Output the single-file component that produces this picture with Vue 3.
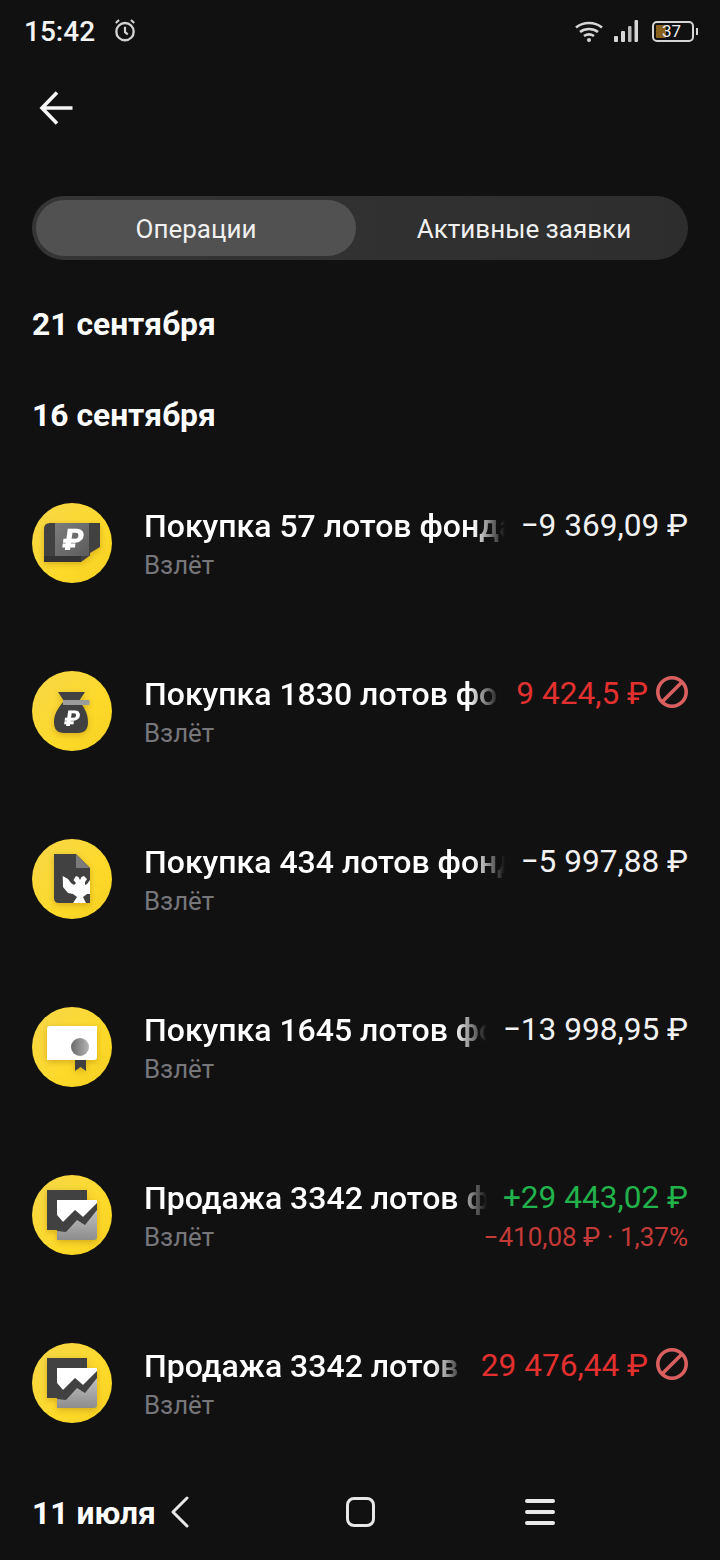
<template>
  <div class="screen">
    <div class="status-bar">
      <span class="time">15:42</span>
      <svg class="alarm" width="26" height="26" viewBox="0 0 24 24" fill="none" stroke="#d2d2d2">
        <circle cx="12" cy="13.500" r="8" stroke-width="2.200" />
        <path d="M12 9v5l2.600 2M3.500 5.500 6.500 2.800M20.500 5.500 17.500 2.800" stroke-width="2" />
      </svg>
      <div class="status-right">
        <svg width="32" height="24" viewBox="0 0 32 24" fill="none" stroke="#d6d6d6" stroke-width="2.600">
          <path d="M3 8.500c7.500-6 18.500-6 26 0M7 13c5.200-4 12.800-4 18 0M11 17c3-2 7-2 10 0" />
          <circle cx="16" cy="21" r="2" fill="#d6d6d6" stroke="none" />
        </svg>
        <svg class="signal" width="26" height="24" viewBox="0 0 26 24" fill="#d6d6d6">
          <rect x="1" y="17" width="4" height="6" rx="1" />
          <rect x="8" y="12" width="4" height="11" rx="1" />
          <rect x="15" y="7" width="3.500" height="16" rx="1" opacity="0.85" />
          <rect x="21.500" y="1" width="3.500" height="22" rx="1" />
        </svg>
        <div class="battery">
          <span class="battery-fill"></span>
          <span class="battery-text">37</span>
          <span class="battery-tip"></span>
        </div>
      </div>
    </div>

    <div class="topbar">
      <svg width="36" height="36" viewBox="0 0 36 36" fill="none" stroke="#f5f5f5" stroke-width="3.600">
        <path d="M33.500 18H3M18 2.500 3 18l15 15.500" />
      </svg>
    </div>

    <div class="tabs">
      <div class="tab active">Операции</div>
      <div class="tab second-tab">Активные заявки</div>
    </div>

    <h2 class="date first">21 сентября</h2>
    <h2 class="date second">16 сентября</h2>

    <ul class="list">
      <li v-for="op in operations" :key="op.id" class="row">
        <svg class="icon" width="80" height="80" viewBox="0 0 80 80">
          <defs>
            <linearGradient :id="'bg' + op.id" x1="0" y1="0" x2="1" y2="1">
              <stop offset="0" stop-color="#f6d64a" />
              <stop offset="0.6" stop-color="#fdda2a" />
              <stop offset="1" stop-color="#f6cf22" />
            </linearGradient>
            <linearGradient :id="'gray' + op.id" x1="0" y1="0" x2="1" y2="1">
              <stop offset="0" stop-color="#7c7c7c" />
              <stop offset="1" stop-color="#5c5c5c" />
            </linearGradient>
            <linearGradient :id="'chart' + op.id" x1="0" y1="0" x2="0" y2="1">
              <stop offset="0" stop-color="#d0d0d0" />
              <stop offset="1" stop-color="#8d8d8d" />
            </linearGradient>
            <linearGradient :id="'seal' + op.id" x1="0" y1="0" x2="1" y2="0">
              <stop offset="0" stop-color="#6a6a6a" />
              <stop offset="1" stop-color="#b4b4b4" />
            </linearGradient>
          </defs>
          <circle cx="40" cy="40" r="40" :fill="'url(#bg' + op.id + ')'" />

          <g v-if="op.icon === 'cash'" class="art">
            <path d="M18 20H68V44L58 50V52.500L49 59H12V26Q12 20 18 20Z" fill="#414141" />
            <path d="M23 20H57V53H23Z" :fill="'url(#gray' + op.id + ')'" />
            <path d="M12 53H49V59H12Z" fill="#333" />
            <text x="40" y="47" class="rub rub-big" transform="skewX(-8) translate(6.500 0)">₽</text>
          </g>

          <g v-else-if="op.icon === 'bag'" class="art">
            <path d="M26 21H53L47 30C52 36 56 42 56 51Q56 62 46 62H32Q22 62 22 51C22 42 27 36 32 30Z" fill="#414141" />
            <path d="M31 29H57Q58.500 31.500 57 34H31Z" fill="#9c9c9c" />
            <text x="40" y="55" class="rub rub-small" transform="skewX(-8) translate(7 0)">₽</text>
          </g>

          <g v-else-if="op.icon === 'doc'" class="art">
            <path d="M22 15H44L58 29V64H27Q22 64 22 59Z" fill="#414141" />
            <path d="M44 15 58 29H44Z" fill="#7a7a7a" />
            <path d="M30.700 37 36 40 39 44 42 46 44 44 41.500 41 44 37 46.500 38 48 41 49.500 38 52 37 55 40 53 43 53 46 55 45 58 41V55L55 55 51 58 54 64H41L45 58 41 55 36 54 31 48Z" fill="#fff" />
          </g>

          <g v-else-if="op.icon === 'cert'" class="art">
            <path d="M43 50H54V64L48.500 60 43 64Z" fill="#414141" />
            <path d="M18 19H65V50Q65 53 62 53H15V22Q15 19 18 19Z" fill="#fff" />
            <circle cx="48" cy="40" r="9" :fill="'url(#seal' + op.id + ')'" />
          </g>

          <g v-else class="art">
            <rect x="15" y="15" width="40" height="40" fill="#414141" />
            <path d="M25 25H65V62Q65 65 62 65H25Z" :fill="'url(#chart' + op.id + ')'" />
            <path d="M25 25H65V28L51 42 43 35 31 47 25 40Z" fill="#fff" />
            <path d="M25 40 31 47 43 35 51 42 65 28V35L53 50 45 45 34 57 25 56Z" fill="#414141" />
          </g>
        </svg>

        <div class="info">
          <div class="title">{{ op.title }}</div>
          <div class="sub">Взлёт</div>
        </div>

        <div class="right">
          <div class="amount-line">
            <span class="amount" :class="op.kind">{{ op.amount }}</span>
            <svg v-if="op.kind === 'failed'" class="ban" width="32" height="32" viewBox="0 0 32 32" fill="none" stroke="#d9605f" stroke-width="3.600">
              <circle cx="16" cy="16" r="14.200" />
              <path d="M6 26 26 6" />
            </svg>
          </div>
          <div v-if="op.extra" class="extra">{{ op.extra }}</div>
        </div>
      </li>
    </ul>

    <div class="navbar">
      <span class="sticky-date">11 июля</span>
      <div class="nav-cell">
        <svg width="20" height="32" viewBox="0 0 20 32" fill="none" stroke="#e8e8e8" stroke-width="3" stroke-linecap="round" stroke-linejoin="round">
          <path d="M17 2 3 16l14 14" />
        </svg>
      </div>
      <div class="nav-cell"><span class="nav-home"></span></div>
      <div class="nav-cell">
        <svg width="30" height="28" viewBox="0 0 30 28" fill="#e8e8e8">
          <rect x="0" y="1" width="30" height="4" rx="2" />
          <rect x="0" y="12" width="30" height="4" rx="2" />
          <rect x="0" y="23" width="30" height="4" rx="2" />
        </svg>
      </div>
    </div>
  </div>
</template>

<script setup>
const operations = [
  { id: 1, icon: "cash", title: "Покупка 57 лотов фонда Взлёт", amount: "−9 369,09 ₽", kind: "minus" },
  { id: 2, icon: "bag", title: "Покупка 1830 лотов фонда Взлёт", amount: "9 424,5 ₽", kind: "failed" },
  { id: 3, icon: "doc", title: "Покупка 434 лотов фонда Взлёт", amount: "−5 997,88 ₽", kind: "minus" },
  { id: 4, icon: "cert", title: "Покупка 1645 лотов фонда Взлёт", amount: "−13 998,95 ₽", kind: "minus" },
  { id: 5, icon: "chart", title: "Продажа 3342 лотов фонда Взлёт", amount: "+29 443,02 ₽", kind: "plus", extra: "−410,08 ₽ · 1,37%" },
  { id: 6, icon: "chart", title: "Продажа 3342 лотов фонда Взлёт", amount: "29 476,44 ₽", kind: "failed" },
];
</script>

<style>
html,
body {
  margin: 0;
  background: #111112;
}
</style>

<style scoped>
.screen {
  width: 720px;
  height: 1560px;
  background: #111112;
  color: #fff;
  font-family: Roboto, "Liberation Sans", sans-serif;
  display: flex;
  flex-direction: column;
  overflow: hidden;
}
.status-bar {
  height: 62px;
  display: flex;
  align-items: center;
  padding: 0 24px;
}
.time {
  font-size: 28px;
  font-weight: 500;
  color: #f4f4f4;
  margin-right: 17px;
}
.alarm {
  margin-top: -2px;
}
.status-right {
  margin-left: auto;
  display: flex;
  align-items: center;
  gap: 8px;
}
.signal {
  margin-right: 5px;
}
.battery {
  position: relative;
  width: 38px;
  height: 17px;
  border: 2px solid #d6d6d6;
  border-radius: 5px;
  margin-right: 2px;
}
.battery-fill {
  position: absolute;
  left: 2px;
  top: 2px;
  bottom: 2px;
  width: 10px;
  background: #8a6220;
  border-radius: 1px;
}
.battery-text {
  position: absolute;
  left: 8px;
  top: -2px;
  font-size: 17px;
  line-height: 21px;
  color: #eee;
}
.battery-tip {
  position: absolute;
  right: -6px;
  top: 5px;
  width: 2px;
  height: 7px;
  background: #d6d6d6;
}
.topbar {
  height: 92px;
  display: flex;
  align-items: center;
  padding-left: 39px;
}
.tabs {
  margin: 42px 32px 0;
  height: 64px;
  padding: 4px;
  box-sizing: border-box;
  border-radius: 32px;
  background: linear-gradient(90deg, #353535, #2d2d2d);
  display: grid;
  grid-template-columns: 320px 1fr;
  font-size: 26px;
  color: #f0f0f0;
}
.tab {
  display: flex;
  align-items: center;
  justify-content: center;
  border-radius: 28px;
  padding-top: 1px;
}
.tab.active {
  background: #515151;
}
.second-tab {
  padding-left: 8px;
}
.date {
  margin: 0;
  padding-left: 32px;
  font-size: 31.800px;
  line-height: 40px;
  font-weight: 700;
}
.date.first {
  margin-top: 44px;
}
.date.second {
  margin-top: 51px;
}
.list {
  list-style: none;
  margin: 68px 0 0;
  padding: 0 32px;
  display: flex;
  flex-direction: column;
  gap: 88px;
  flex: 1;
}
.row {
  height: 80px;
  display: flex;
  align-items: flex-start;
}
.icon {
  flex: none;
  margin-right: 32px;
}
.art {
  filter: drop-shadow(0 2px 3px rgba(140, 95, 0, 0.35));
}
.info {
  flex: 1;
  min-width: 0;
  padding-top: 4px;
}
.title {
  font-size: 32px;
  line-height: 38px;
  font-weight: 500;
  white-space: nowrap;
  overflow: hidden;
  -webkit-mask-image: linear-gradient(90deg, #000 calc(100% - 32px), transparent);
  mask-image: linear-gradient(90deg, #000 calc(100% - 32px), transparent);
}
.sub {
  font-size: 25.800px;
  line-height: 32px;
  margin-top: 4px;
  color: #77777b;
}
.right {
  flex: none;
  margin-left: 16px;
  padding-top: 4px;
}
.amount-line {
  display: flex;
  align-items: center;
  height: 38px;
  justify-content: flex-end;
}
.amount {
  font-size: 31.600px;
  line-height: 38px;
}
.amount.minus {
  color: #f2f2f2;
}
.amount.plus {
  color: #22b24c;
}
.amount.failed {
  color: #e2302f;
}
.ban {
  margin-left: 8px;
  margin-top: -4px;
}
/* does not widen the column, the title runs on above it */
.extra {
  width: 0;
  margin: 4px 0 0 auto;
  display: flex;
  justify-content: flex-end;
  white-space: nowrap;
  font-size: 26px;
  line-height: 32px;
  color: #c43a38;
}
.rub {
  fill: #fff;
  font-weight: 900;
  text-anchor: middle;
}
.rub-big {
  font-size: 30px;
}
.rub-small {
  font-size: 22px;
}
.navbar {
  position: relative;
  height: 96px;
  flex: none;
  padding: 0 90px;
  display: grid;
  grid-template-columns: repeat(3, 180px);
  align-items: center;
  justify-items: center;
}
.nav-cell {
  display: flex;
  align-items: center;
  justify-content: center;
}
.nav-home {
  display: block;
  width: 23px;
  height: 24px;
  border: 3px solid #e8e8e8;
  border-radius: 8px;
}
.sticky-date {
  position: absolute;
  left: 32px;
  top: 29px;
  font-size: 31.800px;
  line-height: 40px;
  font-weight: 700;
}
</style>
